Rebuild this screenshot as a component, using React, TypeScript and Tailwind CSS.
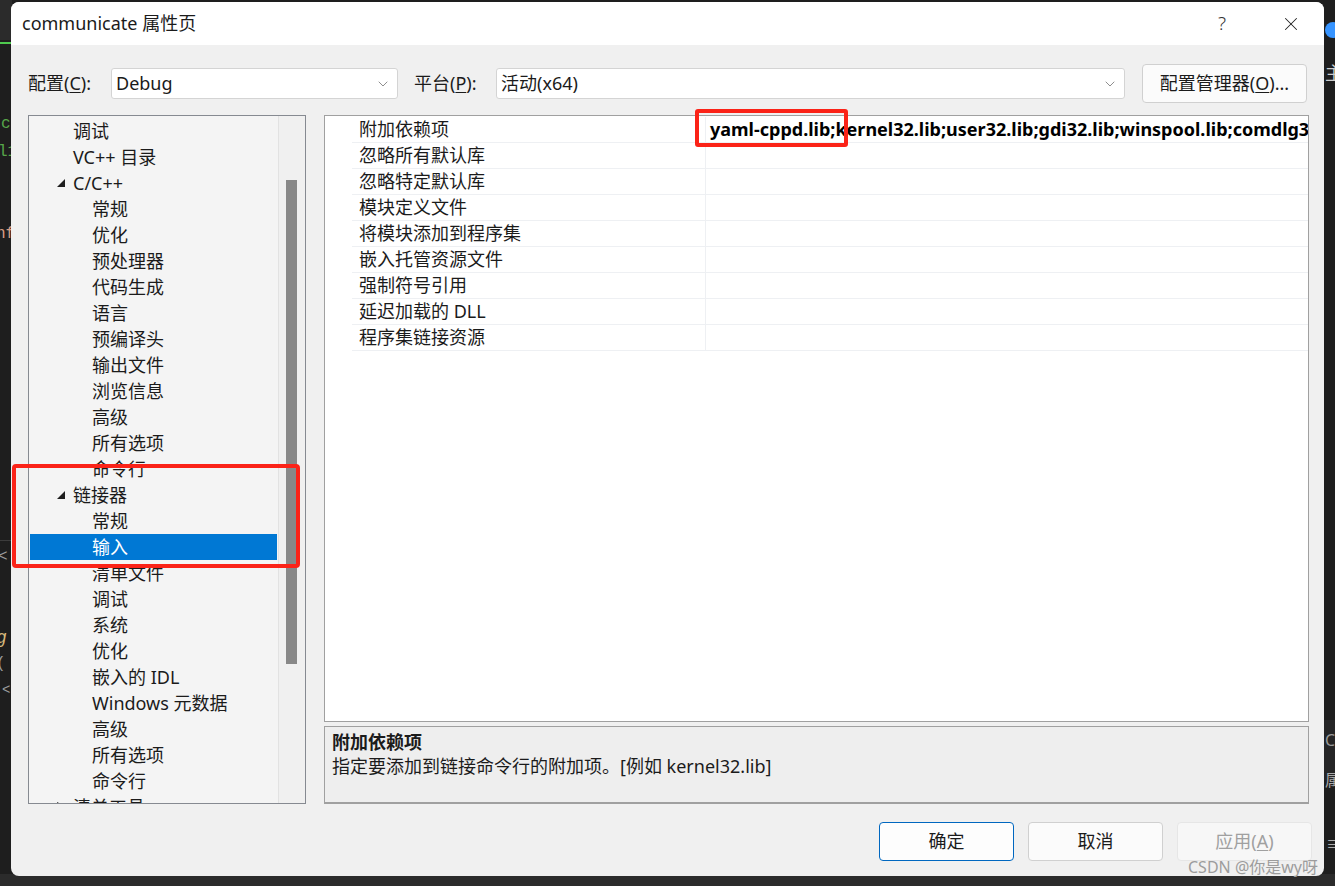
import { ChevronDown, X } from 'lucide-react';

const FONT = "font-['Noto_Sans','Noto_Sans_CJK_SC',sans-serif]";

type Node = { t: string; l: 1 | 2; exp?: boolean; col?: boolean; sel?: boolean };

const tree: Node[] = [
  { t: '调试', l: 1 },
  { t: 'VC++ 目录', l: 1 },
  { t: 'C/C++', l: 1, exp: true },
  { t: '常规', l: 2 },
  { t: '优化', l: 2 },
  { t: '预处理器', l: 2 },
  { t: '代码生成', l: 2 },
  { t: '语言', l: 2 },
  { t: '预编译头', l: 2 },
  { t: '输出文件', l: 2 },
  { t: '浏览信息', l: 2 },
  { t: '高级', l: 2 },
  { t: '所有选项', l: 2 },
  { t: '命令行', l: 2 },
  { t: '链接器', l: 1, exp: true },
  { t: '常规', l: 2 },
  { t: '输入', l: 2, sel: true },
  { t: '清单文件', l: 2 },
  { t: '调试', l: 2 },
  { t: '系统', l: 2 },
  { t: '优化', l: 2 },
  { t: '嵌入的 IDL', l: 2 },
  { t: 'Windows 元数据', l: 2 },
  { t: '高级', l: 2 },
  { t: '所有选项', l: 2 },
  { t: '命令行', l: 2 },
  { t: '清单工具', l: 1, col: true },
];

const props = [
  '附加依赖项',
  '忽略所有默认库',
  '忽略特定默认库',
  '模块定义文件',
  '将模块添加到程序集',
  '嵌入托管资源文件',
  '强制符号引用',
  '延迟加载的 DLL',
  '程序集链接资源',
];

function TreeRow({ n }: { n: Node }) {
  return (
    <div
      className={`flex h-[26px] shrink-0 items-center whitespace-nowrap ${
        n.sel ? 'bg-[#0078d4] text-white' : 'text-[#1b1b1b]'
      }`}
    >
      {n.l === 1 ? (
        <>
          <span className="flex w-[43px] justify-end pr-[8px]">
            {n.exp && (
              <svg width="8" height="8" viewBox="0 0 8 8">
                <polygon points="8,0 8,8 0,8" fill="#1e1e1e" />
              </svg>
            )}
            {n.col && (
              <svg width="8" height="10" viewBox="0 0 8 10">
                <polygon points="0.5,0.5 6.5,5 0.5,9.5" fill="none" stroke="#333" />
              </svg>
            )}
          </span>
          <span>{n.t}</span>
        </>
      ) : (
        <span className="pl-[62px]">{n.t}</span>
      )}
    </div>
  );
}

function Select({ value, w }: { value: string; w: string }) {
  return (
    <div
      className={`flex h-[31px] ${w} items-center rounded-[3px] border border-[#d4d4d4] bg-white pl-[4px] pr-[6px]`}
    >
      <span className="flex-1 text-[#1b1b1b]">{value}</span>
      <ChevronDown size={16} strokeWidth={1} className="text-[#555]" />
    </div>
  );
}

export default function App() {
  return (
    <div className={`relative h-[886px] w-[1335px] overflow-hidden bg-[#1e1e1e] pl-[11px] pt-[2px] text-[18px] ${FONT}`}>
      {/* editor behind the dialog */}
      <div className="absolute left-0 top-0 h-[40px] w-[12px] bg-[#2b2b2b]" />
      <div className="absolute left-0 top-[42px] h-[2px] w-[12px] border-t-2 border-dashed border-[#4ec94e]" />
      <span className="absolute left-[1px] top-[112px] font-mono text-[16px] text-[#57a64a]">c</span>
      <span className="absolute left-[-2px] top-[140px] font-mono text-[16px] text-[#57a64a]">l1</span>
      <span className="absolute left-[-4px] top-[222px] font-mono text-[16px] text-[#d69d85]">nf</span>
      <div className="absolute left-0 top-[540px] h-[1px] w-[12px] bg-[#3c3c3c]" />
      <span className="absolute left-[-2px] top-[545px] font-mono text-[16px] text-[#9b9b9b]">{'<'}</span>
      <span className="absolute left-[-4px] top-[625px] font-mono text-[18px] italic text-[#d7ba7d]">g</span>
      <span className="absolute left-[-4px] top-[652px] font-mono text-[16px] text-[#9b9b9b]">(</span>
      <span className="absolute left-[2px] top-[680px] font-mono text-[14px] text-[#9b9b9b]">{'<'}</span>
      <div className="absolute bottom-0 left-0 h-[12px] w-[1335px] bg-[#2b2b2b]" />
      <div className="absolute right-[-6px] top-[22px] h-[16px] w-[16px] rounded-full bg-[#3794ff]" />
      <span className="absolute left-[1325px] top-[60px] text-[18px] text-[#cccccc]">主</span>
      <div className="absolute left-[1324px] top-[720px] h-[60px] w-[11px] bg-[#252526]" />
      <span className="absolute left-[1325px] top-[728px] text-[16px] text-[#999]">Co</span>
      <span className="absolute left-[1325px] top-[768px] text-[16px] text-[#aaa]">属</span>
      <span className="absolute left-[1326px] top-[832px] text-[16px] text-[#aaa]">≡</span>

      {/* dialog */}
      <div className="relative flex h-[874px] w-[1313px] flex-col overflow-hidden rounded-[8px] bg-[#f0f0f0]">
        <div className="flex h-[43px] shrink-0 items-center bg-white pl-[11px] pr-[22px]">
          <span className="text-[#1b1b1b]">communicate 属性页</span>
          <span className="ml-auto mr-[54px] text-[19px] font-light text-[#333]">?</span>
          <X size={22} strokeWidth={1.1} className="text-[#222]" />
        </div>

        <div className="mt-[19px] flex h-[39px] shrink-0 items-center pl-[17px]">
          <span className="w-[83px] text-[#1b1b1b]">
            配置(<span className="underline underline-offset-2">C</span>):
          </span>
          <Select value="Debug" w="w-[287px]" />
          <span className="ml-[16px] w-[82px] text-[#1b1b1b]">
            平台(<span className="underline underline-offset-2">P</span>):
          </span>
          <Select value="活动(x64)" w="w-[629px]" />
          <div className="ml-[17px] flex h-[39px] w-[165px] items-center justify-center rounded-[4px] border border-[#d0d0d0] bg-[#fbfbfb] text-[#1b1b1b]">
            配置管理器(<span className="underline underline-offset-2">O</span>)...
          </div>
        </div>

        <div className="mt-[12px] flex shrink-0 pl-[17px]">
          {/* tree */}
          <div className="flex h-[689px] w-[278px] border border-[#868a91] bg-[#f4f4f4]">
            <div className="flex flex-1 flex-col overflow-hidden px-[1px] pt-[2px]">
              {tree.map((n, i) => (
                <TreeRow key={i} n={n} />
              ))}
            </div>
            <div className="flex w-[27px] shrink-0 flex-col border-l border-[#e2e2e2] bg-[#f0f0f0] pl-[7px] pt-[64px]">
              <div className="h-[484px] w-[11px] bg-[#888888]" />
            </div>
          </div>

          <div className="ml-[18px] flex w-[985px] flex-col">
            {/* property grid */}
            <div className="flex h-[607px] flex-col border border-[#a0a0a0] bg-white pt-[1px]">
              {props.map((p, i) => (
                <div key={p} className="flex h-[26px] shrink-0 pl-[27px]">
                  <div className="flex w-[354px] items-center border-b border-r border-[#eef0f3] pl-[7px] text-[#1b1b1b]">
                    {p}
                  </div>
                  <div className="flex flex-1 items-center overflow-hidden whitespace-nowrap border-b border-[#eef0f3] pl-[4px] font-bold text-black">
                    {i === 0 ? 'yaml-cppd.lib;kernel32.lib;user32.lib;gdi32.lib;winspool.lib;comdlg32.lib;advapi32.lib;shell32.lib' : ''}
                  </div>
                </div>
              ))}
            </div>
            {/* description */}
            <div className="mt-[4px] flex h-[78px] flex-col border border-b-2 border-[#a0a0a0] bg-[#eeeeee] pl-[7px] pt-[3px] leading-[24px] text-[#1b1b1b]">
              <span className="font-bold">附加依赖项</span>
              <span>指定要添加到链接命令行的附加项。[例如 kernel32.lib]</span>
            </div>
          </div>
        </div>

        <div className="mt-[18px] flex shrink-0 justify-end gap-[14px] pr-[12px]">
          <div className="flex h-[39px] w-[135px] items-center justify-center rounded-[4px] border border-[#0067c0] bg-[#fdfdfd] text-[#1b1b1b]">
            确定
          </div>
          <div className="flex h-[39px] w-[135px] items-center justify-center rounded-[4px] border border-[#d0d0d0] bg-[#fbfbfb] text-[#1b1b1b]">
            取消
          </div>
          <div className="flex h-[39px] w-[135px] items-center justify-center rounded-[4px] border border-[#e6e6e6] bg-[#f7f7f7] text-[#a0a0a0]">
            应用(<span className="underline underline-offset-2">A</span>)
          </div>
        </div>
      </div>

      {/* annotations */}
      <div className="absolute left-[12px] top-[464px] h-[104px] w-[288px] rounded-[4px] border-[4px] border-[#fb2318]" />
      <div className="absolute left-[695px] top-[109px] h-[38px] w-[153px] rounded-[3px] border-[4px] border-[#fb2318]" />
      <span className="absolute left-[1188px] top-[855px] text-[16px] text-[#9c9c9c]">CSDN @你是wy呀</span>
    </div>
  );
}
